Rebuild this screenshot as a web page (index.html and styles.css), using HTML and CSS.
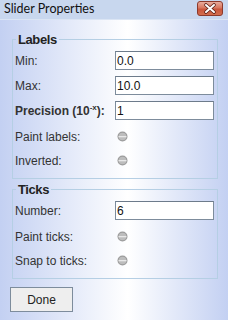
FILE: index.html
```html
<!DOCTYPE html>
<html>
<head>
<meta charset="utf-8">
<link rel="stylesheet" href="styles.css">
</head>
<body>
<div class="window">
  <div class="titlebar">
    <span class="title">Slider Properties</span>
    <span class="close">
      <svg width="26" height="15" viewBox="0 0 26 15">
        <defs>
          <linearGradient id="cg" x1="0" y1="0" x2="0" y2="1">
            <stop offset="0" stop-color="#eab0a2"/>
            <stop offset="0.45" stop-color="#d8775f"/>
            <stop offset="0.55" stop-color="#c9553b"/>
            <stop offset="1" stop-color="#d4704f"/>
          </linearGradient>
        </defs>
        <rect x="0.5" y="0.5" width="25" height="14" rx="2.5" fill="url(#cg)" stroke="#8c3a2c"/>
        <path d="M9 4 L17 11 M17 4 L9 11" stroke="#5a1f16" stroke-width="3.6" stroke-linecap="round"/>
        <path d="M9 4 L17 11 M17 4 L9 11" stroke="#ffffff" stroke-width="2" stroke-linecap="round"/>
      </svg>
    </span>
  </div>
  <div class="content">
    <fieldset class="group">
      <legend>Labels</legend>
      <div class="row field-row"><span class="label">Min:</span><input class="field" type="text" value="0.0"></div>
      <div class="row field-row"><span class="label">Max:</span><input class="field" type="text" value="10.0"></div>
      <div class="row field-row"><span class="label bold">Precision (10<sup>-x</sup>):</span><input class="field" type="text" value="1"></div>
      <div class="row check-row"><span class="label">Paint labels:</span><span class="radio"><svg width="11" height="11" viewBox="0 0 11 11"><circle cx="5.5" cy="5.5" r="5" fill="#9c9c9c"/><circle cx="5.5" cy="5.5" r="3.8" fill="#bdbdbd"/><rect x="1.5" y="5" width="8" height="1.3" fill="#e8e8e8"/></svg></span></div>
      <div class="row check-row"><span class="label">Inverted:</span><span class="radio"><svg width="11" height="11" viewBox="0 0 11 11"><circle cx="5.5" cy="5.5" r="5" fill="#9c9c9c"/><circle cx="5.5" cy="5.5" r="3.8" fill="#bdbdbd"/><rect x="1.5" y="5" width="8" height="1.3" fill="#e8e8e8"/></svg></span></div>
    </fieldset>
    <fieldset class="group">
      <legend>Ticks</legend>
      <div class="row field-row"><span class="label">Number:</span><input class="field" type="text" value="6"></div>
      <div class="row check-row"><span class="label">Paint ticks:</span><span class="radio"><svg width="11" height="11" viewBox="0 0 11 11"><circle cx="5.5" cy="5.5" r="5" fill="#9c9c9c"/><circle cx="5.5" cy="5.5" r="3.8" fill="#bdbdbd"/><rect x="1.5" y="5" width="8" height="1.3" fill="#e8e8e8"/></svg></span></div>
      <div class="row check-row"><span class="label">Snap to ticks:</span><span class="radio"><svg width="11" height="11" viewBox="0 0 11 11"><circle cx="5.5" cy="5.5" r="5" fill="#9c9c9c"/><circle cx="5.5" cy="5.5" r="3.8" fill="#bdbdbd"/><rect x="1.5" y="5" width="8" height="1.3" fill="#e8e8e8"/></svg></span></div>
    </fieldset>
    <button class="done">Done</button>
  </div>
</div>
</body>
</html>
```
FILE: styles.css
```css
html, body {
  margin: 0;
  padding: 0;
}
body {
  width: 228px;
  height: 320px;
  overflow: hidden;
  font-family: "Liberation Sans", Arial, sans-serif;
  font-size: 12px;
  color: #333333;
}
.window {
  width: 228px;
  height: 320px;
  display: flex;
  flex-direction: column;
  background: linear-gradient(to right, #c3d0f2 0%, #ffffff 56%, #c3d0f2 100%);
}
.titlebar {
  height: 19px;
  border-bottom: 1px solid #dbe5f4;
  background: #c8d7ee;
  display: flex;
  align-items: flex-start;
  justify-content: space-between;
  padding-left: 4px;
  padding-right: 5px;
}
.title {
  font-family: Lato, "Liberation Sans", sans-serif;
  font-size: 12.5px;
  line-height: 17px;
  color: #111111;
}
.close {
  margin-top: 1px;
  display: flex;
}
.content {
  display: flex;
  flex-direction: column;
  align-items: flex-start;
  padding-top: 12px;
}
.group {
  box-sizing: border-box;
  width: 206px;
  margin: 0 10px 0 12px;
  border: 1px solid #b5cfe4;
  padding: 4px 2px 8px 2px;
  min-width: 0;
  display: flex;
  flex-direction: column;
  gap: 6px;
}
.group + .group {
  margin-top: 3px;
}
legend {
  margin-left: 1px;
  padding: 0 2px;
  font-size: 13px;
  font-weight: bold;
  letter-spacing: -0.4px;
  line-height: 15px;
  color: #222222;
}
.row {
  display: flex;
}
.field-row {
  align-items: baseline;
  height: 19px;
}
.check-row {
  align-items: center;
  height: 18px;
}
.field-row + .check-row {
  margin-top: 2px;
}
.label {
  width: 100px;
  flex: none;
  white-space: nowrap;
}
.bold {
  font-weight: bold;
}
sup {
  font-size: 8px;
  line-height: 0;
  vertical-align: 5px;
}
.field {
  box-sizing: border-box;
  width: 99px;
  height: 19px;
  margin: 0;
  border: 1px solid #7d8c9c;
  border-top-color: #6d7b8b;
  padding: 0 1px;
  font-family: "Liberation Sans", Arial, sans-serif;
  font-size: 12px;
  color: #111111;
  background: #ffffff;
  outline: none;
}
.radio {
  margin-left: 2px;
  margin-top: -1px;
  display: flex;
}
.done {
  box-sizing: border-box;
  margin: 8px 0 0 10px;
  width: 63px;
  height: 25px;
  border: 1px solid #7d8c9c;
  background: #eeeeee;
  font-family: "Liberation Sans", Arial, sans-serif;
  font-size: 12px;
  color: #222222;
  padding: 0;
}
```
